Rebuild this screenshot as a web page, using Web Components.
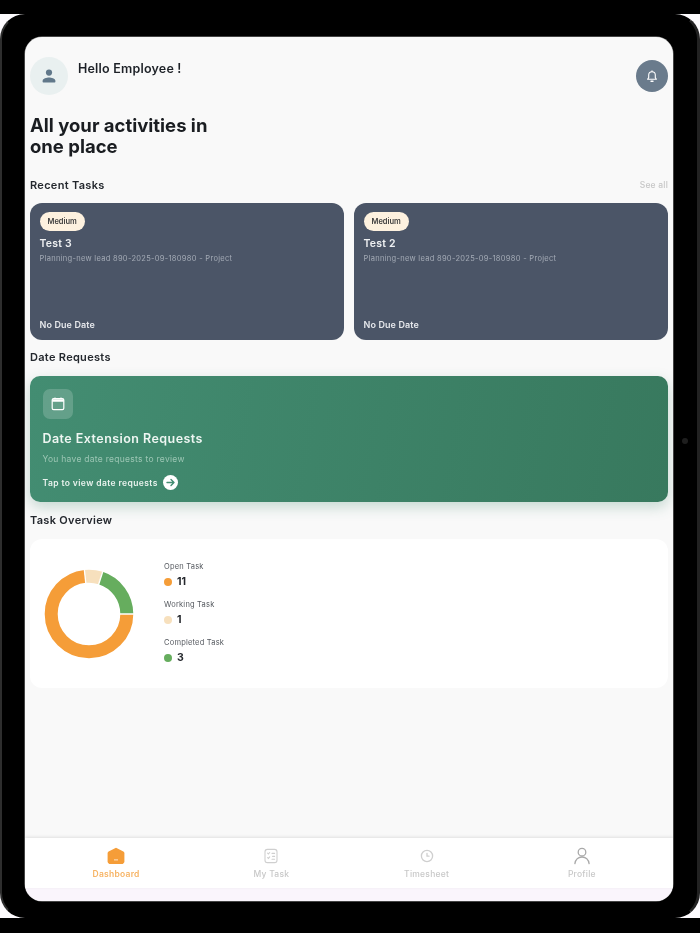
<!DOCTYPE html>
<html><head><meta charset="utf-8"><title>Dashboard</title>
<style>
html,body{margin:0;padding:0;background:#000;width:700px;height:933px;overflow:hidden;font-family:Inter,"Liberation Sans",sans-serif}
.row{display:flex;gap:10px;margin:10px 5px 0}
</style></head><body>
<app-device>
  <app-header></app-header>
  <section-title style="--mt:20px" action="See all">Recent Tasks</section-title>
  <div class="row">
    <task-card title="Test 3"></task-card>
    <task-card title="Test 2"></task-card>
  </div>
  <section-title style="--mt:9px">Date Requests</section-title>
  <date-banner></date-banner>
  <section-title style="--mt:10px">Task Overview</section-title>
  <overview-card>
    <legend-item color="#f59d38" label="Open Task" value="11"></legend-item>
    <legend-item color="#f7e0bd" label="Working Task" value="1"></legend-item>
    <legend-item color="#66ad5e" label="Completed Task" value="3"></legend-item>
  </overview-card>
  <nav-bar slot="nav">
    <nav-item label="Dashboard" active><svg viewBox="0 0 18 18" width="18" height="18"><path d="M9 .8 1.6 4.6C.9 5 .6 5.6.6 6.4v7.8c0 1.7 1.2 2.9 2.9 2.9h11c1.7 0 2.9-1.2 2.9-2.9V6.4c0-.8-.3-1.4-1-1.8z" fill="#f59d38"/><rect x="7" y="12.4" width="4" height="1" fill="#fff" opacity=".75"/></svg></nav-item>
    <nav-item label="My Task"><svg viewBox="0 0 18 18" width="18" height="18" fill="none" stroke="#cfcfcf" stroke-width="1.1" stroke-linecap="round"><rect x="3" y="2.4" width="12" height="13.2" rx="2.4"/><path d="M5.6 6.2l.8.8 1.3-1.5M10 6.4h2.6M10.6 9.4h2M5.6 10.6l.8.8 1.3-1.5M10 12.2h2.6"/></svg></nav-item>
    <nav-item label="Timesheet"><svg viewBox="0 0 18 18" width="18" height="18" fill="none" stroke="#cfcfcf" stroke-width="1.3" stroke-linecap="round" stroke-linejoin="round"><circle cx="9" cy="9" r="5.6"/><path d="M9 6.4V9.2H11"/></svg></nav-item>
    <nav-item label="Profile"><svg viewBox="0 0 18 18" width="18" height="18" fill="none" stroke="#a9a9a9" stroke-width="1.3" stroke-linecap="round"><circle cx="9" cy="5.2" r="3.8"/><path d="M1.9 16.6c.5-3.9 3.4-6.6 7.1-6.6s6.6 2.7 7.1 6.6"/></svg></nav-item>
  </nav-bar>
</app-device>
<script>
function def(name, html){
  customElements.define(name, class extends HTMLElement{
    connectedCallback(){
      if(this.shadowRoot) return;
      const r=this.attachShadow({mode:'open'});
      r.innerHTML=typeof html==='function'?html(this):html;
    }
  });
}
def('app-device',`<style>
:host{display:block;width:700px;height:933px;padding-top:14px;box-sizing:border-box;position:relative}
.band{height:904px;background:#fdfbfe;overflow:hidden}
.body{height:904px;box-sizing:border-box;background:#000;border-radius:25px;border:2px solid #000;border-left-color:#2e2e2e;border-right-width:3px;border-right-color:#222;padding:21px 24px 15px 23px}
.screen{height:100%;border-radius:17px;background:#f9f9f9;overflow:hidden;display:flex;flex-direction:column;filter:blur(.6px);box-shadow:0 0 0 .5px #888}
.main{flex:1;min-height:0;display:flex;flex-direction:column}
.foot{background:#faf5fc;padding-bottom:13px}
.cam{position:absolute;left:682px;top:438px;width:6px;height:6px;border-radius:50%;background:#1e1e1e}
</style><div class="band"><div class="body"><div class="screen"><div class="main"><slot></slot></div><div class="foot"><slot name="nav"></slot></div></div></div></div><div class="cam"></div>`);
def('app-header',`<style>
:host{display:block;padding:20px 5px 0;color:#1d2127}
.top{display:flex;justify-content:space-between;align-items:flex-start}
.who{display:flex;gap:10px}
.av{width:38px;height:38px;border-radius:50%;background:#e9f0f0;display:grid;place-items:center}
.hello{font-size:12.5px;font-weight:600;line-height:16px;margin-top:4px;letter-spacing:.2px}
.bell{width:32px;height:32px;border-radius:50%;background:#6a7b8c;display:grid;place-items:center;margin-top:3px}
h1{margin:20px 0 0;font-size:18.5px;line-height:21px;font-weight:700;color:#1a1d21;width:200px}
</style><div class="top"><div class="who"><div class="av"><svg width="18" height="18" viewBox="0 0 18 18" fill="#61788a"><circle cx="9" cy="5.6" r="3.1"/><path d="M2.6 14.7v-.9c0-2.2 4.2-3.3 6.4-3.3s6.4 1.1 6.4 3.3v.9c0 .4-.3.7-.7.7H3.3c-.4 0-.7-.3-.7-.7z"/></svg></div><div class="hello">Hello Employee !</div></div>
<div class="bell"><svg width="14" height="14" viewBox="0 0 14 14" fill="none" stroke="#fff" stroke-width="1.1" stroke-linejoin="round" stroke-linecap="round"><path d="M2.6 10.2h8.8l-1.1-1.6V6a3.3 3.3 0 0 0-6.6 0v2.6z"/><path d="M6 12.2h2" stroke-width="1.4"/><path d="M7 1.8v.8"/></svg></div></div>
<h1>All your activities in<br>one place</h1>`);
def('section-title',h=>`<style>
:host{display:flex;justify-content:space-between;align-items:center;margin:var(--mt,10px) 5px 0;height:16px}
.t{font-size:11px;font-weight:600;color:#24282e;letter-spacing:.3px}
.a{font-size:8.5px;font-weight:500;color:#c6c6c6;letter-spacing:.2px}
</style><span class="t"><slot></slot></span>${h.getAttribute('action')?`<span class="a">${h.getAttribute('action')}</span>`:''}`);
def('task-card',h=>`<style>
:host{display:flex;flex:1;flex-direction:column;align-items:flex-start;height:137px;box-sizing:border-box;background:#4b5567;border-radius:12px;padding:9px 9.5px 10px;color:#fff}
.b{background:#fdf1df;color:#3f3f3f;font-size:7.5px;font-weight:600;height:19px;line-height:19px;padding:0 8px;border-radius:10px}
.t{font-size:10.5px;font-weight:600;line-height:14px;margin-top:6px;color:#eef0f2;letter-spacing:.2px}
.s{font-size:7.5px;line-height:10px;margin-top:3px;color:#a4abb6;letter-spacing:.3px}
.d{font-size:9px;font-weight:600;margin-top:auto;line-height:11px;color:#e6e8ec;letter-spacing:.1px}
</style><span class="b">Medium</span><div class="t">${h.getAttribute('title')}</div><div class="s">Planning-new lead 890-2025-09-180980 - Project</div><div class="d">No Due Date</div>`);
def('date-banner',`<style>
:host{display:block;margin:11px 5px 0;height:126px;box-sizing:border-box;padding:13px 12.5px;border-radius:10px;background:linear-gradient(100deg,#438d72,#38795e);box-shadow:0 5px 14px rgba(60,130,105,.28);color:#fff}
.i{width:30px;height:30px;border-radius:7px;background:rgba(255,255,255,.18);display:grid;place-items:center}
.t{font-size:12.5px;font-weight:600;letter-spacing:.45px;line-height:16px;margin-top:12px;color:#eef6f2}
.s{font-size:8.5px;line-height:11px;margin-top:7px;color:#9cc6b4;letter-spacing:.28px}
.l{display:flex;align-items:center;gap:5px;font-size:8.5px;font-weight:600;margin-top:10px;color:#e9f3ee;letter-spacing:.4px}
.c{width:15px;height:15px;border-radius:50%;background:#fff;display:grid;place-items:center}
</style><div class="i"><svg width="16" height="16" viewBox="0 0 16 16" fill="none"><rect x="2.2" y="2.6" width="11.6" height="11" rx="1.4" stroke="#fff" stroke-width="1.2"/><path d="M2.2 3.2h11.6v2.6H2.2z" fill="#fff"/><path d="M5 1.4v1.6M11 1.4v1.6" stroke="#fff" stroke-width="1.1"/></svg></div>
<div class="t">Date Extension Requests</div><div class="s">You have date requests to review</div>
<div class="l"><span>Tap to view date requests</span><span class="c"><svg width="11" height="11" viewBox="0 0 11 11" fill="none" stroke="#438d72" stroke-width="1.4" stroke-linecap="round" stroke-linejoin="round"><path d="M2 5.5h7M6 2.5l3 3-3 3"/></svg></span></div>`);
def('overview-card',`<style>
:host{display:flex;align-items:center;gap:30px;margin:11px 5px 0;height:149px;box-sizing:border-box;padding:0 0 0 14px;border-radius:12px;background:#fff}
.l{display:flex;flex-direction:column;gap:11px}
svg{display:block}
</style><svg width="90" height="90" viewBox="-45 -45 90 90">
<g fill="none" stroke-width="13">
<circle r="37.8" stroke="#f59d38" pathLength="360" stroke-dasharray="264 96"/>
<circle r="37.8" stroke="#f7e0bd" pathLength="360" stroke-dasharray="24 336" stroke-dashoffset="-264"/>
<circle r="37.8" stroke="#66ad5e" pathLength="360" stroke-dasharray="72 288" stroke-dashoffset="-288"/>
</g>
<g stroke="#fff" stroke-width="1.3"><path d="M30 0H46"/><path d="M-3.1 -29.8L-4.8 -45.7"/><path d="M9.3 -28.5L14.2 -43.8"/></g>
</svg><div class="l"><slot></slot></div>`);
def('legend-item',h=>`<style>
:host{display:block;color:#25282d}
.n{font-size:7.5px;line-height:10px;color:#55595f;letter-spacing:.2px}
.v{display:flex;align-items:center;gap:5px;font-size:10.5px;font-weight:700;line-height:15px;margin-top:2px}
.d{width:8px;height:8px;border-radius:50%;background:${h.getAttribute('color')}}
</style><div class="n">${h.getAttribute('label')}</div><div class="v"><span class="d"></span>${h.getAttribute('value')}</div>`);
def('nav-bar',`<style>
:host{display:flex;padding:0 13.5px;background:#fff;height:50px;box-sizing:border-box;box-shadow:0 -1px 3px rgba(0,0,0,.1)}
</style><slot></slot>`);
def('nav-item',h=>`<style>
:host{flex:1;display:flex;flex-direction:column;align-items:center;padding-top:9px;box-sizing:border-box}
.l{font-size:8.5px;font-weight:${h.hasAttribute('active')?600:500};color:${h.hasAttribute('active')?'#f7b465':'#c8c8c8'};line-height:12px;margin-top:3px;letter-spacing:.25px}
::slotted(svg){display:block}
</style><slot></slot><div class="l">${h.getAttribute('label')}</div>`);
</script>
</body></html>
